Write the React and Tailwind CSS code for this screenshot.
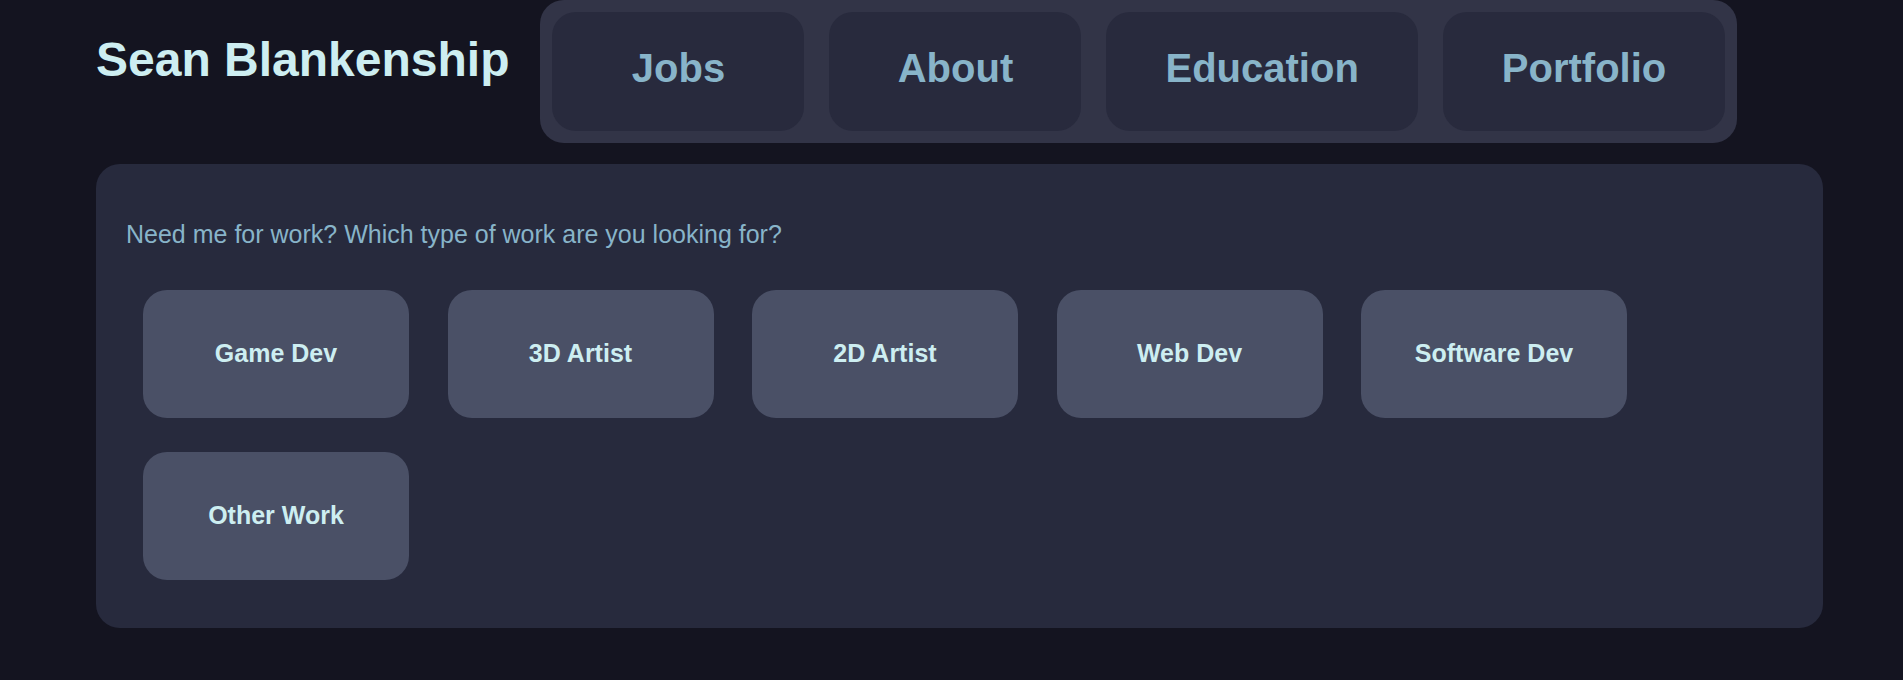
const navItems = ["Jobs", "About", "Education", "Portfolio"];
const workTypes = [
  "Game Dev",
  "3D Artist",
  "2D Artist",
  "Web Dev",
  "Software Dev",
  "Other Work",
];

function App() {
  return (
    <div className="min-h-screen bg-[#141420] font-['Liberation_Sans',Arial,sans-serif]">
      {/* Header */}
      <header className="flex items-start gap-[31px] pl-[96px]">
        <h1 className="pt-[32px] text-[48px] font-bold leading-[1.15] text-[#cdeef1]">
          Sean Blankenship
        </h1>

        <nav className="flex gap-[25px] rounded-[24px] bg-[#323447] p-[12px]">
          {navItems.map((item) => (
            <button
              key={item}
              className="flex h-[119px] min-w-[252px] items-center justify-center rounded-[24px] bg-[#282a3d] px-[59px] pb-[7px] text-[40px] font-bold leading-[46px] text-[#88b4c9]"
            >
              {item}
            </button>
          ))}
        </nav>
      </header>

      {/* Work panel */}
      <main className="ml-[96px] mt-[21px] w-[1727px] rounded-[24px] bg-[#272a3d] px-[30px] pb-[48px] pt-[56px]">
        <p className="text-[25px] leading-[28px] text-[#88b4c9]">
          Need me for work? Which type of work are you looking for?
        </p>

        <div className="ml-[17px] mt-[42px] flex flex-wrap gap-x-[38.5px] gap-y-[34px]">
          {workTypes.map((type) => (
            <button
              key={type}
              className="flex h-[128px] w-[266px] items-center justify-center rounded-[24px] bg-[#4a5066] text-[25px] font-bold text-[#cdeef1]"
            >
              {type}
            </button>
          ))}
        </div>
      </main>
    </div>
  );
}

export default App;
